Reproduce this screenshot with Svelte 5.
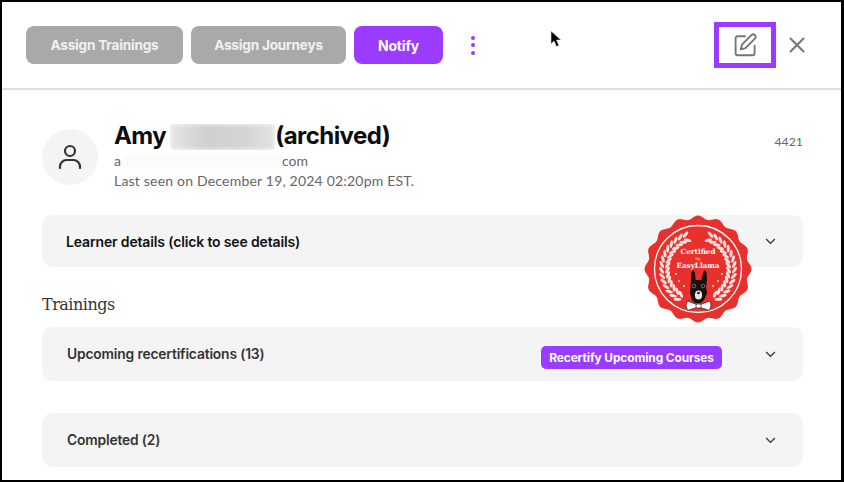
<script>
  const cx = 54, cy = 54;
  let scallop = '';
  const n = 16;
  for (let i = 0; i <= 360; i += 2) {
    const a = (i * Math.PI) / 180;
    const r = 51.7 + 1.8 * Math.cos(n * a);
    scallop += (i === 0 ? 'M' : 'L') + (cx + r * Math.sin(a)).toFixed(2) + ' ' + (cy - r * Math.cos(a)).toFixed(2);
  }
  scallop += 'Z';
  const leaves = [];
  for (const side of [-1, 1]) {
    for (let t = 20; t <= 152; t += 9) {
      const a = (t * Math.PI) / 180;
      const base = (Math.atan2(-Math.sin(a), -side * Math.cos(a)) * 180) / Math.PI;
      for (const [r, tilt] of [[30.5, -32], [36.5, 32]]) {
        const x = cx + side * r * Math.sin(a);
        const y = cy - r * Math.cos(a);
        leaves.push({ x, y, rot: base + side * tilt });
      }
    }
  }
  const stars = [[32, 59], [35, 66], [40, 71], [78, 59], [74, 66], [69, 71]];
</script>

<div class="frame">
  <header class="topbar">
    <div class="actions">
      <button class="btn muted wide">Assign Trainings</button>
      <button class="btn muted mid">Assign Journeys</button>
      <button class="btn primary">Notify</button>
      <span class="kebab"><i></i><i></i><i></i></span>
    </div>
    <div class="tools">
      <div class="highlight">
        <svg width="24" height="24" viewBox="0 0 24 24" fill="none" stroke="#757575" stroke-width="1.9" stroke-linecap="round" stroke-linejoin="round">
          <path d="M12 3.200H4.600a2 2 0 0 0-2 2v15a2 2 0 0 0 2 2h15a2 2 0 0 0 2-2v-7.400" />
          <path d="M18.600 1.900a2.500 2.500 0 0 1 3.500 3.500l-9.600 9.800-4.700 1.200 1.200-4.700z" />
        </svg>
      </div>
      <svg class="close" width="16" height="16" viewBox="0 0 16 16" fill="none" stroke="#757575" stroke-width="2" stroke-linecap="round">
        <path d="M1.500 1.500l13 13M14.500 1.500l-13 13" />
      </svg>
    </div>
  </header>

  <main class="content">
    <section class="profile">
      <div class="avatar">
        <svg width="24" height="26" viewBox="0 0 24 26" fill="none" stroke="#333" stroke-width="2.200" stroke-linecap="round">
          <circle cx="12" cy="7" r="5" />
          <path d="M2 24v-1.500a6.500 6.500 0 0 1 6.500-6.500h7a6.500 6.500 0 0 1 6.500 6.500V24" />
        </svg>
      </div>
      <div class="who">
        <h1>Amy <span class="blur-wrap"><span class="blur"></span></span>(archived)</h1>
        <p class="email">a<span class="mask"></span>com</p>
        <p class="seen">Last seen on December 19, 2024 02:20pm EST.</p>
      </div>
      <span class="id">4421</span>
    </section>

    <div class="acc learner">
      <span class="label dark">Learner details (click to see details)</span>
      <svg class="chev" width="11" height="7" viewBox="0 0 12 8" fill="none" stroke="#333" stroke-width="1.500"><path d="M1 1.200l5 5 5-5" /></svg>
    </div>

    <h2>Trainings</h2>

    <div class="acc tall">
      <span class="label">Upcoming recertifications (13)</span>
      <button class="recert">Recertify Upcoming Courses</button>
      <svg class="chev" width="11" height="7" viewBox="0 0 12 8" fill="none" stroke="#333" stroke-width="1.500"><path d="M1 1.200l5 5 5-5" /></svg>
    </div>

    <div class="acc tall completed">
      <span class="label">Completed (2)</span>
      <svg class="chev" width="11" height="7" viewBox="0 0 12 8" fill="none" stroke="#333" stroke-width="1.500"><path d="M1 1.200l5 5 5-5" /></svg>
    </div>
  </main>

  <svg class="badge" width="108" height="108" viewBox="0 0 108 108">
    <path d={scallop} fill="#e8302c" />
    <circle cx="54" cy="54" r="43.500" fill="none" stroke="#fff" stroke-width="1.300" />
    {#each leaves as l}
      <ellipse cx={l.x} cy={l.y} rx="3.800" ry="1.500" fill="#fde3e0" transform="rotate({l.rot} {l.x} {l.y})" />
    {/each}
    {#each stars as s}
      <circle cx={s[0]} cy={s[1]} r="1" fill="#fde3e0" />
    {/each}
    <text x="54" y="39" class="bt big">Certified</text>
    <text x="54" y="45" class="bt small">by</text>
    <text x="54" y="53" class="bt big">EasyLlama</text>
    <path d="M47 66l.500-9 2-2 1.500 3 .500 7h6l1.500-7 1.500-3 2 2 .500 8-1 7 1 6-3 7-3 3h-6l-3-3-2-7z" fill="#17120f" />
    <ellipse cx="54.500" cy="80" rx="3.600" ry="4.500" fill="#e9e4df" />
    <circle cx="54.500" cy="78" r="1.300" fill="#17120f" />
    <circle cx="50" cy="71" r="1.800" fill="none" stroke="#bbb" stroke-width=".5" />
    <circle cx="59" cy="71" r="1.800" fill="none" stroke="#bbb" stroke-width=".5" />
    <path d="M43.500 86l9 3.500h4l9.500-3.500 1 4.500-1.500 5-9-3h-4l-9 3-1.500-5z" fill="#fff" stroke="#222" stroke-width=".7" />
    <rect x="52" y="89" width="5" height="4" rx="1.500" fill="#fff" stroke="#222" stroke-width=".7" />
  </svg>

  <svg class="cursor" width="13" height="19" viewBox="0 0 13 19">
    <path d="M1 1l0 13 3-3 2.500 5.500 2.500-1-2.500-5.500 4.500 0z" fill="#000" stroke="#ddd" stroke-width=".6" />
  </svg>
</div>

<style>
  :global(body) { margin: 0; }
  .frame {
    position: relative;
    width: 844px;
    height: 482px;
    box-sizing: border-box;
    border: 2px solid #000;
    border-right-width: 3px;
    background: #fff;
    overflow: hidden;
    font-family: Inter, "Liberation Sans", sans-serif;
  }
  .topbar {
    height: 88px;
    box-sizing: border-box;
    border-bottom: 2px solid #dedede;
    display: flex;
    align-items: center;
    justify-content: space-between;
    padding: 0 36px 0 24px;
  }
  .actions { display: flex; align-items: center; gap: 8px; }
  .btn {
    height: 38px;
    border: 0;
    border-radius: 8px;
    color: #fff;
    font: 700 13.600px Inter, sans-serif;
    letter-spacing: -0.2px;
    padding: 0;
  }
  .muted { background: #a9a9a9; color: #f1f1f1; }
  .wide { width: 157px; }
  .mid { width: 155px; }
  .primary { background: #9a3bff; width: 89px; font-size: 14px; }
  .kebab { display: flex; flex-direction: column; gap: 3.500px; margin-left: 20px; }
  .kebab i { width: 4px; height: 4px; border-radius: 50%; background: #9a3bff; display: block; }
  .tools { display: flex; align-items: center; gap: 13px; }
  .highlight {
    width: 62px;
    height: 46px;
    box-sizing: border-box;
    border: 5px solid #9a3bff;
    display: flex;
    align-items: center;
    justify-content: center;
  }
  .content { padding: 0 38px 0 40px; }
  .profile { display: flex; align-items: flex-start; height: 125px; box-sizing: border-box; padding-top: 39px; }
  .avatar {
    width: 56px;
    height: 56px;
    border-radius: 50%;
    background: #f4f4f4;
    display: flex;
    align-items: center;
    justify-content: center;
    flex: none;
  }
  .who { margin-left: 16px; flex: 1; margin-top: -8px; }
  h1 {
    margin: 0;
    font: 700 24px/30px Inter, sans-serif;
    letter-spacing: -0.57px;
    color: #0c0c0c;
    display: flex;
    white-space: pre;
  }
  .blur-wrap { width: 105px; height: 26px; overflow: hidden; margin-top: 3px; display: block; margin-left: -1px; }
  .blur { display: block; width: 105px; height: 26px; background: linear-gradient(90deg, #e6e6e6, #cfcfcf 35%, #d4d4d4 70%, #e2e2e2); filter: blur(2px); }
  .email, .seen { margin: 0; font: 400 14px/20px Lato, sans-serif; color: #666; }
  .email { display: flex; height: 20px; }
  .mask { width: 160px; height: 12px; margin: 4px 0 0 1px; background: #fbfbfb; display: block; }
  .seen { letter-spacing: 0.2px; }
  .id { font: 400 12.300px Lato, sans-serif; color: #666; margin-top: 5px; }
  .acc {
    background: #f4f4f4;
    border-radius: 10px;
    display: flex;
    align-items: center;
    padding: 0 27px 0 25px;
    height: 54px;
  }
  .learner { height: 52px; padding-left: 24px; }
  .tall { height: 54px; }
  .label { font: 600 13.800px Inter, sans-serif; color: #333; letter-spacing: -0.15px; flex: 1; }
  .label.dark { color: #111; font-size: 14px; }
  .completed { margin-top: 32px; }
  h2 {
    margin: 27px 0 12px;
    font: 400 16px/21px "DejaVu Serif", serif;
    letter-spacing: -0.5px;
    color: #333;
  }
  .recert {
    width: 181px;
    height: 23px;
    border: 0;
    border-radius: 5px;
    padding: 0;
    background: #9a3bff;
    color: #fff;
    font: 700 11.900px Inter, sans-serif;
    letter-spacing: -0.1px;
    margin: 6px 43px 0 0;
  }
  .badge { position: absolute; left: 642px; top: 213px; }
  .bt { text-anchor: middle; fill: #fff; }
  .big { font: 700 7.200px "DejaVu Serif", serif; }
  .small { font: 400 4px "DejaVu Sans", sans-serif; }
  .cursor { position: absolute; left: 548px; top: 28px; }
</style>
